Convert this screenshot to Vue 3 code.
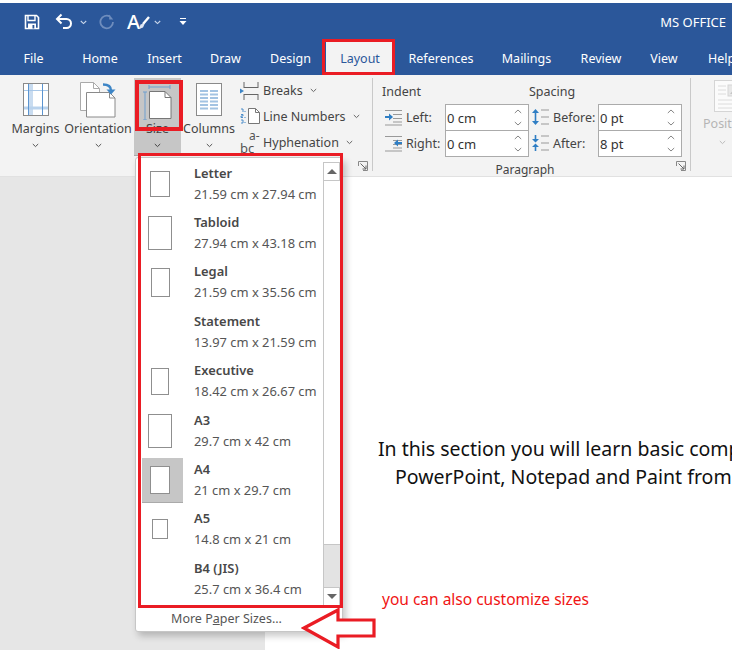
<script setup>
const tabs = ['File','Home','Insert','Draw','Design','Layout','References','Mailings','Review','View','Help']
const sizes = [
  { name:'Letter', dim:'21.59 cm x 27.94 cm', w:20, h:26 },
  { name:'Tabloid', dim:'27.94 cm x 43.18 cm', w:24, h:34 },
  { name:'Legal', dim:'21.59 cm x 35.56 cm', w:19, h:29 },
  { name:'Statement', dim:'13.97 cm x 21.59 cm', w:0, h:0 },
  { name:'Executive', dim:'18.42 cm x 26.67 cm', w:18, h:27 },
  { name:'A3', dim:'29.7 cm x 42 cm', w:24, h:34 },
  { name:'A4', dim:'21 cm x 29.7 cm', w:20, h:28, on:true },
  { name:'A5', dim:'14.8 cm x 21 cm', w:16, h:20 },
  { name:'B4 (JIS)', dim:'25.7 cm x 36.4 cm', w:0, h:0 },
]
const spin = [
  { label:'Left:', val:'0 cm', icon:'left' },
  { label:'Right:', val:'0 cm', icon:'right' },
]
const spin2 = [
  { label:'Before:', val:'0 pt', icon:'before' },
  { label:'After:', val:'8 pt', icon:'after' },
]
</script>

<template>
  <div class="window">
    <header class="titlebar">
      <div class="qat">
        <svg class="qi save" width="18" height="18" viewBox="0 0 18 18">
          <path d="M2.5 2.5h11l2 2v11h-13z" fill="none" stroke="#fff" stroke-width="1.6"/>
          <path d="M5 3v4.500h7V3" fill="none" stroke="#fff" stroke-width="1.4"/>
          <path d="M5 15.500v-5h8v5" fill="#fff"/>
          <rect x="9.500" y="12" width="1.800" height="3.500" fill="#2b579a"/>
        </svg>
        <svg class="qi undo" width="20" height="18" viewBox="0 0 20 18">
          <path d="M2 6h9.500a4.500 4.500 0 0 1 0 9H8" fill="none" stroke="#fff" stroke-width="2"/>
          <path d="M6.500 1.500L2 6l4.500 4.500" fill="none" stroke="#fff" stroke-width="2"/>
        </svg>
        <svg class="qi chev1" width="7" height="5" viewBox="0 0 7 5"><path d="M.8 1l2.700 2.600L6.200 1" fill="none" stroke="#c9d6ea" stroke-width="1.100"/></svg>
        <svg class="qi redo" width="16" height="16" viewBox="0 0 16 16">
          <path d="M11 2.600A6.300 6.300 0 1 0 14 8" fill="none" stroke="#6f8dbd" stroke-width="1.800"/>
          <path d="M10.200 0.500v5h4z" fill="#6f8dbd"/>
        </svg>
        <span class="qi font-a">A</span>
        <svg class="qi brush" width="12" height="14" viewBox="0 0 12 14">
          <path d="M11 1L5 8" stroke="#fff" stroke-width="2.400"/>
          <path d="M5.400 7.400L2.500 8.500 1 13l4-1.500 1.400-3z" fill="#dfe6f2"/>
        </svg>
        <svg class="qi chev2" width="7" height="5" viewBox="0 0 7 5"><path d="M.8 1l2.700 2.600L6.200 1" fill="none" stroke="#c9d6ea" stroke-width="1.100"/></svg>
        <svg class="qi cust" width="8" height="8" viewBox="0 0 8 8"><path d="M1 0.500h6" stroke="#fff" stroke-width="1"/><path d="M.5 3h7L4 7z" fill="#fff"/></svg>
      </div>
      <span class="doc-name">MS OFFICE</span>
    </header>

    <nav class="tabs">
      <span v-for="t in tabs" :key="t" class="tab" :class="{ active: t === 'Layout' }">{{ t }}</span>
    </nav>

    <section class="ribbon">
      <div class="group page-setup">
        <div class="large">
          <button class="big margins">
            <svg width="26" height="33" viewBox="0 0 26 33">
              <rect x=".5" y=".5" width="25" height="32" fill="#fff" stroke="#8a8a8a"/>
              <path d="M8 1v31" stroke="#c9dcf0" stroke-width="4" fill="none"/>
              <path d="M1 25h24" stroke="#b9d2ec" stroke-width="3" fill="none"/>
              <path d="M1 7.500h24" stroke="#a9c8e8" fill="none"/>
              <path d="M5.500 1v31M19.500 1v31" stroke="#5b94d0" fill="none"/>
            </svg>
            <span class="big-label">Margins</span>
            <svg class="chev" width="7" height="5" viewBox="0 0 7 5"><path d="M.8 1l2.700 2.600L6.200 1" fill="none" stroke="#555" stroke-width="1"/></svg>
          </button>
          <button class="big orient">
            <svg width="36" height="36" viewBox="0 0 36 36">
              <path d="M.5.5h13l6 6v22H.5z" fill="#fff" stroke="#aaa"/>
              <path d="M13.500.5v6h6" fill="none" stroke="#aaa"/>
              <path d="M6.500 10.500h23l5.500 5.500v19H6.500z" fill="#fff" stroke="#8a8a8a"/>
              <path d="M29.500 10.500v5.500h5.500" fill="none" stroke="#8a8a8a"/>
              <path d="M23 2.500c5 0 8 2 8 6" fill="none" stroke="#3d85c6" stroke-width="2.400"/>
              <path d="M26.500 7.500h9l-4.500 5z" fill="#3d85c6"/>
            </svg>
            <span class="big-label">Orientation</span>
            <svg class="chev" width="7" height="5" viewBox="0 0 7 5"><path d="M.8 1l2.700 2.600L6.200 1" fill="none" stroke="#555" stroke-width="1"/></svg>
          </button>
          <button class="big size">
            <svg width="29" height="36" viewBox="0 0 29 36">
              <path d="M6 3h21M6 1v4M27 1v4M2 8v28M0 8h4M0 36h4" fill="none" stroke="#6f9fce" stroke-width="1"/>
              <path d="M6.500 7.500h15.500l6 6v21H6.500z" fill="#fff" stroke="#777"/>
              <path d="M22 7.500v6h6" fill="none" stroke="#777"/>
            </svg>
            <span class="big-label">Size</span>
            <svg class="chev" width="7" height="5" viewBox="0 0 7 5"><path d="M.8 1l2.700 2.600L6.200 1" fill="none" stroke="#444" stroke-width="1"/></svg>
          </button>
          <button class="big columns">
            <svg width="26" height="33" viewBox="0 0 26 33">
              <rect x=".5" y=".5" width="25" height="32" fill="#fff" stroke="#8a8a8a"/>
              <path d="M4 8h8M14 8h8M4 11.500h8M14 11.500h8M4 15h8M14 15h8M4 18.500h8M14 18.500h8M4 22h8M14 22h8M4 25.500h8M14 25.500h8" stroke="#a3c3e2" stroke-width="2"/>
            </svg>
            <span class="big-label">Columns</span>
            <svg class="chev" width="7" height="5" viewBox="0 0 7 5"><path d="M.8 1l2.700 2.600L6.200 1" fill="none" stroke="#555" stroke-width="1"/></svg>
          </button>
          <div class="small-col">
            <div class="small">
              <svg width="20" height="18" viewBox="0 0 20 18">
                <path d="M4 6V0M18 6V0M4 12v6M18 12v6M4 5.500h14M4 12.500h14" fill="none" stroke="#666"/>
                <path d="M0 6.500l4 2.500-4 2.500z" fill="#3d85c6"/>
              </svg>
              <span>Breaks</span>
              <svg class="chev" width="7" height="5" viewBox="0 0 7 5"><path d="M.8 1l2.700 2.600L6.200 1" fill="none" stroke="#666" stroke-width="1"/></svg>
            </div>
            <div class="small">
              <svg width="20" height="16" viewBox="0 0 20 16">
                <path d="M8.500.5h7l4 4v11h-11z" fill="#fff" stroke="#777"/>
                <path d="M15.500.5v4h4" fill="none" stroke="#777"/>
                <path d="M1 1h2v3M1 6.500h2v1.500H1v1.500h2M1 12h2v3H1" fill="none" stroke="#3d85c6" stroke-width=".9"/>
                <path d="M5 3v1M5 9v1M5 14v1" stroke="#3d85c6"/>
              </svg>
              <span>Line Numbers</span>
              <svg class="chev" width="7" height="5" viewBox="0 0 7 5"><path d="M.8 1l2.700 2.600L6.200 1" fill="none" stroke="#666" stroke-width="1"/></svg>
            </div>
            <div class="small hyph">
              <span class="hy-icon"><span class="hy-a">a-</span><span class="hy-b">bc</span></span>
              <span>Hyphenation</span>
              <svg class="chev" width="7" height="5" viewBox="0 0 7 5"><path d="M.8 1l2.700 2.600L6.200 1" fill="none" stroke="#666" stroke-width="1"/></svg>
            </div>
          </div>
        </div>
        <svg class="launcher" width="10" height="10" viewBox="0 0 10 10">
          <path d="M.5 5V.5H9.500V9.500H5" fill="none" stroke="#888"/>
          <path d="M2.500 2.500L8 8M8 4.500V8H4.500" fill="none" stroke="#666"/>
        </svg>
      </div>

      <div class="group paragraph">
        <div class="para-cols">
          <div class="para-col indent">
            <div class="para-head">Indent</div>
            <div v-for="s in spin" :key="s.label" class="spin-row">
              <svg width="17" height="17" viewBox="0 0 17 17">
                <path d="M0 1.500h17M8 5.500h9M8 9.500h9M8 13h9M0 16h17" stroke="#999"/>
                <path v-if="s.icon === 'left'" d="M0 8h5" stroke="#2f7ec4" stroke-width="2"/>
                <path v-if="s.icon === 'left'" d="M4 4.500L8 8l-4 3.500z" fill="#2f7ec4"/>
                <path v-if="s.icon === 'right'" d="M17 8h-5" stroke="#2f7ec4" stroke-width="2"/>
                <path v-if="s.icon === 'right'" d="M13 4.500L9 8l4 3.500z" fill="#2f7ec4"/>
              </svg>
              <span class="spin-label">{{ s.label }}</span>
              <div class="spin-box">
                <span>{{ s.val }}</span>
                <span class="spin-arrows">
                  <svg width="8" height="5" viewBox="0 0 8 5"><path d="M.8 4L4 1l3.200 3" fill="none" stroke="#777" stroke-width=".9"/></svg>
                  <svg width="8" height="5" viewBox="0 0 8 5"><path d="M.8 1L4 4l3.200-3" fill="none" stroke="#777" stroke-width=".9"/></svg>
                </span>
              </div>
            </div>
          </div>
          <div class="para-col spacing">
            <div class="para-head">Spacing</div>
            <div v-for="s in spin2" :key="s.label" class="spin-row">
              <svg width="17" height="18" viewBox="0 0 17 18">
                <path d="M9 2h8M9 9h8M9 16h8" stroke="#999"/>
                <path v-if="s.icon === 'before'" d="M3.500 3v12" stroke="#2f7ec4" stroke-width="1.600"/>
                <path v-if="s.icon === 'before'" d="M0 5l3.500-4L7 5zM0 13l3.500 4L7 13z" fill="#2f7ec4"/>
                <path v-if="s.icon === 'after'" d="M3.500 1v6M3.500 11v6" stroke="#2f7ec4" stroke-width="1.600"/>
                <path v-if="s.icon === 'after'" d="M0 5l3.500 3.500L7 5zM0 13l3.500-3.500L7 13z" fill="#2f7ec4"/>
              </svg>
              <span class="spin-label">{{ s.label }}</span>
              <div class="spin-box">
                <span>{{ s.val }}</span>
                <span class="spin-arrows">
                  <svg width="8" height="5" viewBox="0 0 8 5"><path d="M.8 4L4 1l3.200 3" fill="none" stroke="#777" stroke-width=".9"/></svg>
                  <svg width="8" height="5" viewBox="0 0 8 5"><path d="M.8 1L4 4l3.200-3" fill="none" stroke="#777" stroke-width=".9"/></svg>
                </span>
              </div>
            </div>
          </div>
        </div>
        <div class="group-name">Paragraph</div>
        <svg class="launcher" width="10" height="10" viewBox="0 0 10 10">
          <path d="M.5 5V.5H9.500V9.500H5" fill="none" stroke="#888"/>
          <path d="M2.500 2.500L8 8M8 4.500V8H4.500" fill="none" stroke="#666"/>
        </svg>
      </div>

      <div class="group position">
        <svg class="pos-icon" width="30" height="32" viewBox="0 0 30 32">
          <rect x=".5" y=".5" width="29" height="31" fill="#fbfbfb" stroke="#d5d5d5"/>
          <path d="M4 6h8M4 10h8M4 14h8M4 20h22M4 24h22M4 28h22" stroke="#dcdcdc"/>
          <rect x="14" y="5" width="12" height="11" fill="#e8e8e8" stroke="#d5d5d5"/>
          <path d="M16 14l4-5 4 5z" fill="#c4c4c4"/>
        </svg>
        <span class="pos-label">Position</span>
        <svg class="chev" width="7" height="5" viewBox="0 0 7 5"><path d="M.8 1l2.700 2.600L6.200 1" fill="none" stroke="#bbb" stroke-width="1"/></svg>
      </div>
    </section>

    <main class="workspace">
      <div class="gutter"></div>
      <div class="page">
        <p class="line one">In this section you will learn basic computer skills in Word,</p>
        <p class="line two">PowerPoint, Notepad and Paint from scratch.</p>
        <p class="note">you can also customize sizes</p>
      </div>
    </main>

    <div class="menu">
      <div class="menu-scroll">
        <ul class="list">
          <li v-for="s in sizes" :key="s.name" class="item">
            <span class="thumb-cell" :class="{ on: s.on }">
              <span v-if="s.w" class="thumb" :style="{ width: s.w + 'px', height: s.h + 'px' }"></span>
            </span>
            <span class="item-text">
              <b>{{ s.name }}</b>
              <span>{{ s.dim }}</span>
            </span>
          </li>
        </ul>
        <div class="scrollbar">
          <span class="sb-btn"><i class="tri up"></i></span>
          <span class="sb-thumb"></span>
          <span class="sb-track"></span>
          <span class="sb-btn"><i class="tri down"></i></span>
        </div>
      </div>
      <div class="more">More P<u>a</u>per Sizes...</div>
    </div>

    <div class="red-box"></div>
    <svg class="arrow" width="76" height="42" viewBox="0 0 76 42">
      <path d="M3 21L37 3v10h36v16H37v11z" fill="#fff" stroke="#ea1c24" stroke-width="3.200"/>
    </svg>
  </div>
</template>

<style scoped>
.window {
  position: relative;
  width: 732px;
  height: 647px;
  margin-top: 3px;
  overflow: hidden;
  background: #fff;
  font-family: "Noto Sans", "Open Sans", sans-serif;
  color: #444;
  font-size: 12.500px;
}
.titlebar {
  height: 39px;
  background: #2b579a;
  display: flex;
  align-items: center;
  justify-content: space-between;
  padding: 0 6px 1px 23px;
  box-sizing: border-box;
}
.qat { display: flex; align-items: center; height: 100%; }
.qi { display: block; flex: none; }
.save { margin-right: 14px; }
.undo { margin-right: 5px; }
.chev1 { margin-right: 12px; }
.redo { margin-right: 12px; }
.font-a { color: #fff; font-size: 20px; line-height: 20px; width: 13px; font-weight: 500; }
.brush { margin: 2px 4px 0 -2px; }
.chev2 { margin-right: 18px; }
.doc-name { color: #fff; font-size: 13px; }
.tabs {
  height: 33px;
  background: #2b579a;
  display: grid;
  grid-template-columns: 67px 66px 63px 59px 71px 68px 94px 77px 72px 54px 61px;
  align-items: center;
}
.tab { color: #fff; text-align: center; font-size: 12.500px; line-height: 33px; position: relative; white-space: nowrap; }
.tab.active { background: #f3f3f3; color: #2b579a; }
.tab.active::after {
  content: "";
  position: absolute;
  left: -4px; right: -1px; top: -3px; bottom: 0;
  border: 3px solid #ea1c24;
  box-sizing: border-box;
}
.ribbon {
  height: 102px;
  background: #f3f3f3;
  display: flex;
  position: relative;
  box-sizing: border-box;
  border-bottom: 1px solid #e1e1e1;
}
.group { position: relative; flex: none; box-sizing: border-box; }
.page-setup { width: 373px; border-right: 1px solid #c9c9c9; margin: 3px 0 5px; padding-left: 4px; }
.large { display: flex; align-items: flex-start; }
.big {
  position: relative;
  border: 0; padding: 5px 0 0; margin: 0; background: none; font: inherit; color: #444;
  display: flex; flex-direction: column; align-items: center; height: 78px; box-sizing: border-box;
}
.margins { width: 63px; }
.orient { width: 62px; padding-top: 4px; }
.size { width: 47px; margin-left: 5px; background: #c6c6c6; padding-top: 6px; border-bottom: 1px solid #aaa; }
.columns { width: 56px; }
.big-label { font-size: 12.500px; line-height: 18px; white-space: nowrap; position: absolute; top: 42px; left: 50%; transform: translateX(-50%); }
.big > .chev { position: absolute; top: 65px; left: 50%; margin-left: -3.500px; }
.small-col { margin-left: 3px; display: flex; flex-direction: column; width: 125px; }
.small { display: flex; align-items: center; height: 25.500px; gap: 3px; font-size: 12.500px; white-space: nowrap; color: #444; }
.small .chev { margin-left: 4px; }
.hyph { padding-top: 1px; box-sizing: content-box; height: 25px; }
.hy-icon { position: relative; width: 20px; height: 20px; flex: none; font-size: 12px; line-height: 12px; color: #555; }
.hy-a { position: absolute; left: 9px; top: -3px; }
.hy-b { position: absolute; left: 0; top: 9px; font-size: 13px; }
.launcher { position: absolute; right: 4px; bottom: 0; }
.paragraph { width: 318px; border-right: 1px solid #c9c9c9; margin: 3px 0 5px; padding: 1px 0 0 9px; }
.para-cols { display: flex; }
.para-col { display: flex; flex-direction: column; }
.indent { width: 147px; }
.para-head { height: 25px; line-height: 25px; font-size: 12.500px; }
.spin-row { display: flex; align-items: center; height: 26px; }
.spin-row > svg { flex: none; margin-left: 3px; }
.spin-label { width: 43px; padding-left: 4px; font-size: 12.500px; box-sizing: border-box; flex: none; }
.spacing .spin-label { width: 49px; }
.spin-box {
  width: 84px; height: 27px; box-sizing: border-box; background: #fff; border: 1px solid #ababab;
  display: flex; align-items: center; justify-content: space-between; padding: 0 6px 0 1px;
  font-size: 13px; color: #333; margin-bottom: -1px;
}
.spin-arrows { display: flex; flex-direction: column; gap: 7px; }
.spin-arrows svg { display: block; }
.group-name { text-align: center; font-size: 12px; line-height: 16px; margin-top: 6px; }
.paragraph .group-name { width: 286px; }
.position { padding: 5px 0 0 12px; display: flex; flex-direction: column; align-items: flex-start; }
.pos-icon { margin-left: 11px; }
.pos-label { color: #b5b5b5; font-size: 12.500px; margin-top: 3px; line-height: 18px; }
.position .chev { margin: 7px 0 0 16px; }
.workspace { display: flex; height: 473px; }
.gutter { width: 265px; background: #e6e6e6; flex: none; }
.page { flex: 1; min-width: 0; overflow: hidden; background: #fff; padding: 258px 0 0 113px; }
.line { margin: 0; font-size: 19.500px; line-height: 28px; color: #111; white-space: nowrap; }
.line.two { padding-left: 17px; }
.note { margin: 97px 0 0 4px; color: #f01414; font-size: 15.500px; line-height: 22px; white-space: nowrap; }
.menu {
  position: absolute;
  left: 135px; top: 154px;
  width: 208px;
  height: 475px;
  background: #fff;
  border: 1px solid #c6c6c6;
  border-radius: 3px;
  box-sizing: border-box;
  box-shadow: 3px 4px 7px rgba(0,0,0,.22);
  display: flex;
  flex-direction: column;
}
.menu-scroll { display: flex; height: 450px; }
.list { list-style: none; margin: 0; padding: 1px 0 0 6px; width: 187px; flex: none; box-sizing: border-box; }
.item { display: flex; height: 49.400px; align-items: center; color: #555; font-size: 12.900px; }
.thumb-cell { width: 41px; height: 45px; padding-right: 5px; display: flex; align-items: center; justify-content: center; flex: none; box-sizing: border-box; }
.thumb-cell.on { background: #c6c6c6; border-bottom: 1px solid #aaa; }
.thumb { display: block; background: #fff; border: 1px solid #8f8f8f; box-sizing: border-box; }
.item-text { display: flex; flex-direction: column; margin-left: 11px; line-height: 21px; white-space: nowrap; }
.item-text b { font-weight: 600; color: #484848; }
.scrollbar { width: 16px; display: flex; flex-direction: column; flex: none; height: 444px; margin-top: 4px; border-left: 1px solid #c6c6c6; }
.sb-btn { height: 19px; flex: none; display: flex; align-items: center; justify-content: center; background: #fff; border: 1px solid #c6c6c6; border-left: 0; box-sizing: border-box; }
.sb-thumb { height: 364px; background: #fff; flex: none; border-bottom: 1px solid #c6c6c6; box-sizing: border-box; }
.sb-track { flex: 1; background: #e3e3e3; }
.tri { width: 0; height: 0; border-left: 5px solid transparent; border-right: 5px solid transparent; }
.tri.up { border-bottom: 5px solid #666; }
.tri.down { border-top: 5px solid #666; }
.more { flex: 1; text-align: center; color: #555; font-size: 12.500px; line-height: 22px; padding: 0 25px 0 0; }
.red-box {
  position: absolute;
  left: 138px; top: 150px;
  width: 205px; height: 455px;
  box-sizing: border-box;
  border: 3.500px solid #ea1c24;
}
.big.size::after {
  content: "";
  position: absolute;
  left: 1px; top: 2px;
  width: 48px; height: 51px;
  box-sizing: border-box;
  border: 4px solid #ea1c24;
}
.arrow { position: absolute; left: 301px; top: 604px; }
</style>

<style>
html, body { margin: 0; background: #fff; }
</style>
